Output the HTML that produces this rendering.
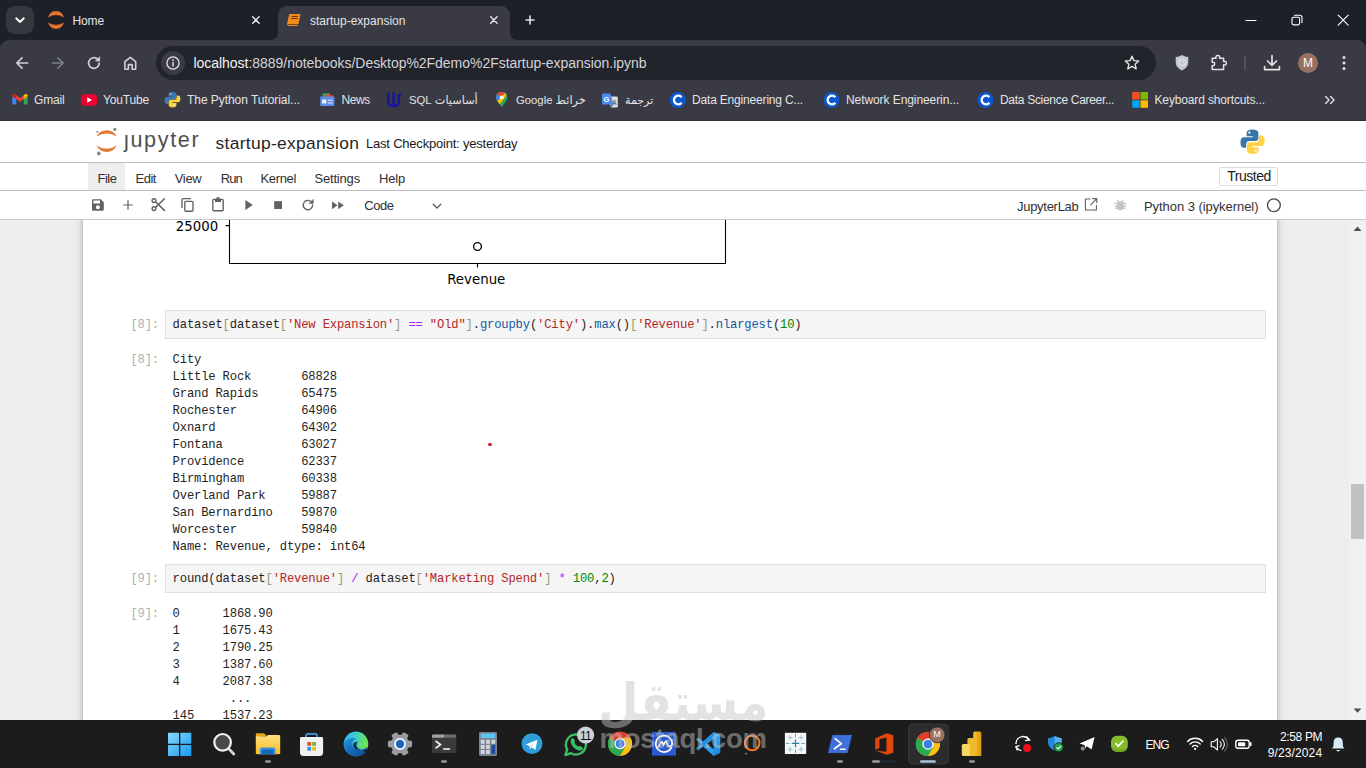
<!DOCTYPE html>
<html lang="en">
<head>
<meta charset="utf-8">
<title>startup-expansion</title>
<style>
*{box-sizing:border-box;margin:0;padding:0}
html,body{width:1366px;height:768px;overflow:hidden;background:#fff}
body{font-family:"Liberation Sans","DejaVu Sans",sans-serif;position:relative;color:#000}
.abs{position:absolute}
svg{position:absolute;overflow:visible}
/* chrome */
#tabstrip{position:absolute;left:0;top:0;width:1366px;height:60px;background:#1e2029}
#toolbar{position:absolute;left:0;top:40px;width:1366px;height:81px;background:#393a43;border-radius:9px 9px 0 0}
#activetab{position:absolute;left:278px;top:6px;width:232px;height:34px;background:#393a43;border-radius:9px 9px 0 0}
.tabtxt{position:absolute;top:14px;font-size:12px;color:#e3e3e3;line-height:15px;white-space:nowrap}
#urlbar{position:absolute;left:156px;top:46px;width:999.5px;height:34px;border-radius:17px;background:#22242c}
#urltxt{position:absolute;left:193.5px;top:53.5px;font-size:14px;letter-spacing:-0.035px;line-height:18px;color:#d2d3d6;white-space:nowrap}
.bm{position:absolute;top:93px;font-size:12px;line-height:15px;color:#e3e3e3;white-space:nowrap}
#pageedge{position:absolute;left:0;top:120px;width:1366px;height:1px;background:#303138}
/* jupyter */
#page{position:absolute;left:0;top:121px;width:1366px;height:599px;background:#fff}
#nbarea{position:absolute;left:0;top:220px;width:1349px;height:500px;background:#eee}
#nbarea{overflow:hidden}
#nbpanel{position:absolute;left:83px;top:-20px;width:1193.5px;height:560px;background:#fff;box-shadow:0px 2px 4px -1px rgba(0,0,0,.2),0px 4px 5px 0px rgba(0,0,0,.14),0px 1px 10px 0px rgba(0,0,0,.12)}
.hl{position:absolute;left:0;width:1366px;height:1px;background:#bdbdbd}
.menu{position:absolute;top:171px;font-size:13px;line-height:15px;color:#303030;white-space:nowrap}
.code{font-family:"Liberation Mono","DejaVu Sans Mono",monospace;font-size:12.2px;letter-spacing:-0.17px;line-height:17px;white-space:pre;color:#1f1f1f}
.code i,.code s,.code b,.code u,.code em{font-style:normal;text-decoration:none;font-weight:normal}
.code i{color:#999977}.code s{color:#b42626}.code b{color:#aa22ff}.code u{color:#15579f}.code em{color:#008800}
.cellin{position:absolute;left:165px;width:1101px;height:29px;background:#f5f5f5;border:1px solid #e0e0e0}
.prompt{position:absolute;left:130.4px;color:#b0b0b0}
/* taskbar */
#taskbar{position:absolute;left:0;top:720px;width:1366px;height:48px;background:#1c1c1c}
.tbt{font-size:12px;line-height:14px;color:#fff;white-space:nowrap}
</style>
</head>
<body>
<div id="tabstrip"></div>
<div id="toolbar"></div>
<div id="activetab"></div>
<!-- ===== Chrome browser UI ===== -->
<div class="tabtxt" style="left:72.5px;letter-spacing:-0.13px">Home</div>
<div class="tabtxt" style="left:310px">startup-expansion</div>
<div id="urlbar"></div>
<div id="urltxt"><span style="color:#f2f2f2">localhost</span>:8889/notebooks/Desktop%2Fdemo%2Fstartup-expansion.ipynb</div>
<div class="bm" style="left:34px;letter-spacing:-0.17px">Gmail</div>
<div class="bm" style="left:103px;letter-spacing:-0.17px">YouTube</div>
<div class="bm" style="left:187px;letter-spacing:-0.05px">The Python Tutorial...</div>
<div class="bm" style="left:341.5px;letter-spacing:-0.38px">News</div>
<div class="bm" style="left:409px;font-size:11.3px" dir="rtl">أساسيات SQL</div>
<div class="bm" style="left:516px;font-size:11.3px" dir="rtl">خرائط Google</div>
<div class="bm" style="left:625px;font-size:11px" dir="rtl">ترجمة</div>
<div class="bm" style="left:692px;letter-spacing:-0.18px">Data Engineering C...</div>
<div class="bm" style="left:846px;letter-spacing:-0.08px">Network Engineerin...</div>
<div class="bm" style="left:1000px;letter-spacing:-0.3px">Data Science Career...</div>
<div class="bm" style="left:1154.5px;letter-spacing:-0.14px">Keyboard shortcuts...</div>
<div class="abs" style="left:1298px;top:53px;width:20px;height:20px;border-radius:10px;background:#9a7064;color:#fff;font-size:12px;line-height:20px;text-align:center">M</div>
<svg id="chromeicons" width="1366" height="120" viewBox="0 0 1366 120" style="left:0;top:0" fill="none" stroke-linecap="round" stroke-linejoin="round">
  <!-- tab search button -->
  <rect x="6" y="6" width="28" height="28" rx="9" fill="#363840"/>
  <path d="M16.2 18.3 L20 22 L23.8 18.3" stroke="#fff" stroke-width="1.9"/>
  <!-- jupyter favicon (Home tab) -->
  <path d="M48.5 16.9 A7.8 7.8 0 0 1 63.5 16.9 A15.75 15.75 0 0 0 48.5 16.9 Z" fill="#e8742c" stroke="#e8742c" stroke-width="0.4"/>
  <path d="M48.5 23.1 A7.8 7.8 0 0 0 63.5 23.1 A15.75 15.75 0 0 1 48.5 23.1 Z" fill="#e8742c" stroke="#e8742c" stroke-width="0.4"/>
  <!-- close x home tab -->
  <path d="M252.7 16.8 L259.1 23.2 M259.1 16.8 L252.7 23.2" stroke="#e3e3e3" stroke-width="1.5"/>
  <!-- active tab flares -->
  <path d="M270 40 Q278 40 278 32 L278 40 Z" fill="#393a43" stroke="none"/>
  <path d="M518 40 Q510 40 510 32 L510 40 Z" fill="#393a43" stroke="none"/>
  <!-- notebook favicon -->
  <g transform="translate(287 13.3)">
    <path d="M3.2 0.8 L12.6 0.8 Q13.6 0.8 13.4 1.8 L11.6 10.2 Q11.4 11 10.6 11 L1 11 Q0 11 0.2 10 L2 1.8 Q2.2 0.8 3.2 0.8 Z" fill="#f28a1c" stroke="none"/>
    <path d="M0.6 10.6 L0.6 11.4 Q0.6 12.2 1.6 12.2 L10.4 12.2" stroke="#f28a1c" stroke-width="1"/>
    <path d="M5 3.2 L10.6 3.2 M4.6 5.2 L10.2 5.2" stroke="#6a3500" stroke-width="1"/>
  </g>
  <!-- close x active tab -->
  <path d="M490.7 16.8 L497.1 23.2 M497.1 16.8 L490.7 23.2" stroke="#e3e3e3" stroke-width="1.5"/>
  <!-- new tab plus -->
  <path d="M526.1 20 L533.9 20 M530 16.1 L530 23.9" stroke="#e3e3e3" stroke-width="1.6"/>
  <!-- window controls -->
  <path d="M1246 20.5 L1256 20.5" stroke="#fff" stroke-width="1.1"/>
  <rect x="1292" y="17.3" width="7.6" height="7.6" rx="1.6" stroke="#fff" stroke-width="1.1"/>
  <path d="M1294.4 15.2 L1299.6 15.2 Q1302 15.2 1302 17.6 L1302 22.6" stroke="#fff" stroke-width="1.1"/>
  <path d="M1338.2 15.2 L1348.2 25.2 M1348.2 15.2 L1338.2 25.2" stroke="#fff" stroke-width="1.1"/>
  <!-- nav: back, forward, reload, home -->
  <path d="M27.6 63 L17 63 M22 57.8 L16.8 63 L22 68.2" stroke="#d0d1d4" stroke-width="1.7"/>
  <path d="M52.4 63 L63 63 M58 57.8 L63.2 63 L58 68.2" stroke="#7b7d84" stroke-width="1.7"/>
  <path d="M99.2 63 A5.3 5.3 0 1 1 97.6 59.2" stroke="#d0d1d4" stroke-width="1.7"/>
  <path d="M99.6 57.2 L99.6 61 L95.8 61 Z" fill="#d0d1d4" stroke="#d0d1d4" stroke-width="0.8"/>
  <path d="M124.9 69.2 L124.9 61.6 L130.3 57.4 L135.7 61.6 L135.7 69.2 L132.2 69.2 L132.2 64.6 L128.4 64.6 L128.4 69.2 Z" stroke="#d0d1d4" stroke-width="1.6"/>
  <!-- site info -->
  <circle cx="173" cy="63" r="12" fill="#3a3b44"/>
  <circle cx="173" cy="63" r="6.1" stroke="#e3e3e3" stroke-width="1.3"/>
  <path d="M173 62.4 L173 66" stroke="#e3e3e3" stroke-width="1.4"/>
  <circle cx="173" cy="59.9" r="0.85" fill="#e3e3e3"/>
  <!-- star -->
  <path d="M1132 56.2 L1133.9 60.6 L1138.7 61 L1135.1 64.2 L1136.2 68.9 L1132 66.4 L1127.8 68.9 L1128.9 64.2 L1125.3 61 L1130.1 60.6 Z" stroke="#e3e3e3" stroke-width="1.4"/>
  <!-- shield extension -->
  <path d="M1182 55 Q1185 56.8 1188.3 57 L1188.3 62.5 Q1188 68 1182 70.5 Q1176 68 1175.7 62.5 L1175.7 57 Q1179 56.8 1182 55 Z" fill="#c3c7ce" stroke="none"/>
  <circle cx="1182.4" cy="62.4" r="3.3" stroke="#e9ebef" stroke-width="1"/>
  <path d="M1182.4 62.4 L1184.6 60.4" stroke="#e9ebef" stroke-width="0.9"/>
  <!-- puzzle -->
  <path d="M1212.2 58.2 L1216 58.2 Q1215.4 55.4 1217.8 55.4 Q1220.2 55.4 1219.6 58.2 L1223.6 58.2 L1223.6 61.6 Q1226.4 61 1226.4 63.2 Q1226.4 65.4 1223.6 64.8 L1223.6 69.6 L1212.2 69.6 L1212.2 65.6 Q1214.6 66 1214.6 63.9 Q1214.6 61.8 1212.2 62.2 Z" stroke="#e3e3e3" stroke-width="1.5"/>
  <!-- separator -->
  <path d="M1245 56 L1245 70" stroke="#5c5e66" stroke-width="1.4"/>
  <!-- download -->
  <path d="M1272 55.6 L1272 65 M1267.6 61 L1272 65.4 L1276.4 61" stroke="#e3e3e3" stroke-width="1.7"/>
  <path d="M1264.6 66.6 L1264.6 69.6 L1279.4 69.6 L1279.4 66.6" stroke="#e3e3e3" stroke-width="1.7"/>
  <!-- kebab -->
  <circle cx="1344" cy="57.6" r="1.5" fill="#e3e3e3"/><circle cx="1344" cy="63" r="1.5" fill="#e3e3e3"/><circle cx="1344" cy="68.4" r="1.5" fill="#e3e3e3"/>
  <!-- bookmark favicons -->
  <g stroke="none">
    <!-- gmail -->
    <path d="M12.4 96.2 L12.4 103.4 Q12.4 104.5 13.5 104.5 L16.3 104.5 L16.3 99 Z" fill="#4285f4"/>
    <path d="M27.6 96.2 L27.6 103.4 Q27.6 104.5 26.5 104.5 L23.7 104.5 L23.7 99 Z" fill="#34a853"/>
    <path d="M12.4 96.2 L12.4 95.4 Q12.4 94 14 94 Q14.8 94 15.4 94.5 L20 98 L24.6 94.5 Q25.2 94 26 94 Q27.6 94 27.6 95.4 L27.6 96.2 L23.7 99.1 L20 101.9 L16.3 99.1 Z" fill="#ea4335"/>
    <path d="M23.7 95.2 L24.6 94.5 Q25.2 94 26 94 Q27.6 94 27.6 95.4 L27.6 96.2 L23.7 99.1 Z" fill="#fbbc04"/>
    <path d="M16.3 95.2 L15.4 94.5 Q14.8 94 14 94 Q12.4 94 12.4 95.4 L12.4 96.2 L16.3 99.1 Z" fill="#c5221f"/>
    <!-- youtube -->
    <rect x="81" y="94.2" width="16" height="11.5" rx="3.2" fill="#f0002f"/>
    <path d="M87.2 97.3 L92 100 L87.2 102.7 Z" fill="#fff"/>
    <!-- python -->
    <path d="M172.3 92 Q168.6 92 168.6 94.4 L168.6 96.4 L172.6 96.4 L172.6 97.1 L166.9 97.1 Q164.6 97.1 164.6 100.6 Q164.6 104 166.9 104 L168.3 104 L168.3 101.8 Q168.3 99.6 170.6 99.6 L174.4 99.6 Q176.3 99.6 176.3 97.7 L176.3 94.4 Q176.3 92 172.3 92 Z" fill="#3d7ab3"/>
    <circle cx="170.4" cy="94.1" r="0.75" fill="#dfe8f0"/>
    <path d="M172.7 107.4 Q176.4 107.4 176.4 105 L176.4 103 L172.4 103 L172.4 102.3 L178.1 102.3 Q180.4 102.3 180.4 98.8 Q180.4 95.4 178.1 95.4 L176.7 95.4 L176.7 97.6 Q176.7 99.8 174.4 99.8 L170.6 99.8 Q168.7 99.8 168.7 101.7 L168.7 105 Q168.7 107.4 172.7 107.4 Z" fill="#ffd43b"/>
    <circle cx="174.6" cy="105.3" r="0.75" fill="#fff7d0"/>
    <!-- news -->
    <path d="M322.5 93.6 L329.5 93 L330 97 L322.8 97 Z" fill="#34a853"/>
    <path d="M326 94.2 L333.4 95.4 L332.8 99 L326 98 Z" fill="#ea4335"/>
    <path d="M320.2 96.4 L333.2 96.4 Q334.4 96.4 334.4 97.6 L334.4 104.8 Q334.4 106 333.2 106 L321.4 106 Q320.2 106 320.2 104.8 Z" fill="#5b8def"/>
    <path d="M322 99.6 L326.4 99.6 L326.4 103.6 L322 103.6 Z M328 99.8 L332.6 99.8 L332.6 100.8 L328 100.8 Z M328 102.4 L332.6 102.4 L332.6 103.4 L328 103.4 Z" fill="#e8eefc"/>
    <!-- udacity U -->
    <path d="M387 93.4 L389.6 92.2 L389.6 101.6 Q389.6 104.4 392.4 104.8 L392.4 92.6 L394.8 92.6 L394.8 104.8 Q397.6 104.4 397.6 101.6 L397.6 94.2 L403 92.2 L400.2 95.6 L400.2 101.8 Q400.2 107.4 393.6 107.4 Q387 107.4 387 101.8 Z" fill="#17179a"/>
    <!-- maps pin -->
    <path d="M501.7 92 Q507.3 92 507.3 97.4 Q507.3 100.2 503.6 104.2 Q502.4 105.6 501.7 107.4 Q501 105.6 499.8 104.2 Q496.1 100.2 496.1 97.4 Q496.1 92 501.7 92 Z" fill="#34a853"/>
    <path d="M501.7 92 Q498.4 92 497 94.4 L501.7 97.4 L505 93 Q503.6 92 501.7 92 Z" fill="#ea4335"/>
    <path d="M497 94.4 Q496.1 95.6 496.1 97.4 Q496.1 99 497.4 101 L501.7 97.4 Z" fill="#4285f4"/>
    <path d="M497.4 101 Q498.6 102.8 499.8 104.2 L506.4 95.6 Q505.8 94 505 93 Z" fill="#fbbc04"/>
    <circle cx="501.7" cy="97.3" r="1.9" fill="#fff"/>
    <!-- translate -->
    <path d="M607.6 96.6 L616.6 96.6 Q617.8 96.6 617.8 97.8 L617.8 106.2 Q617.8 107.4 616.6 107.4 L611 107.4 Z" fill="#dcdde0"/>
    <path d="M603.2 93.4 L610.4 93.4 L613.4 104.6 L603.2 104.6 Q602 104.6 602 103.4 L602 94.6 Q602 93.4 603.2 93.4 Z" fill="#4a8af4"/>
    <path d="M611 107.4 L613.4 104.6 L610.6 104.6 Z" fill="#3367d6"/>
    <!-- coursera x3 -->
    <circle cx="677.8" cy="100" r="8" fill="#0b57d0"/>
    <circle cx="831.5" cy="100" r="8" fill="#0b57d0"/>
    <circle cx="985.5" cy="100" r="8" fill="#0b57d0"/>
    <!-- microsoft -->
    <rect x="1132.2" y="92" width="7.5" height="7.5" fill="#f25022"/><rect x="1140.5" y="92" width="7.5" height="7.5" fill="#7fba00"/>
    <rect x="1132.2" y="100.3" width="7.5" height="7.5" fill="#00a4ef"/><rect x="1140.5" y="100.3" width="7.5" height="7.5" fill="#ffb900"/>
  </g>
  <g stroke="#fff" stroke-width="2.3" stroke-linecap="butt">
    <path d="M681.6 97.3 A4.3 4.3 0 1 0 681.6 102.7"/>
    <path d="M835.3 97.3 A4.3 4.3 0 1 0 835.3 102.7"/>
    <path d="M989.3 97.3 A4.3 4.3 0 1 0 989.3 102.7"/>
  </g>
  <g font-family="Liberation Sans, sans-serif" font-weight="bold" stroke="none">
    <text x="603.6" y="101.6" font-size="7.5" fill="#fff">G</text>
    <text x="612" y="105.4" font-size="6.5" fill="#6b6f78">A</text>
  </g>
  <!-- bookmarks overflow chevrons -->
  <path d="M1325.6 96.6 L1329 100 L1325.6 103.4 M1330.6 96.6 L1334 100 L1330.6 103.4" stroke="#e3e3e3" stroke-width="1.4"/>
</svg>
<div id="pageedge"></div>
<div id="page"></div>
<div id="nbarea"><div id="nbpanel"></div></div>
<!-- ===== Jupyter header ===== -->
<div class="hl" style="top:162px"></div>
<div class="hl" style="top:190px"></div>
<div class="hl" style="top:219px;background:#c8c8c8"></div>
<div class="abs" style="left:88px;top:163px;width:37px;height:27px;background:#eeeeee"></div>
<div class="abs" id="jlogo" style="left:124px;top:127px;font-size:21.6px;line-height:26px;letter-spacing:1.64px;color:#505050;white-space:nowrap">jupyter</div>
<div class="abs" style="left:124px;top:129.5px;width:8px;height:5.4px;background:#fff"></div>
<div class="abs" style="left:215.5px;top:131.8px;font-size:17.4px;line-height:22px;letter-spacing:0.32px;color:#262626;white-space:nowrap">startup-expansion</div>
<div class="abs" style="left:366px;top:135.9px;font-size:13px;line-height:15px;letter-spacing:-0.21px;color:#1a1a1a;white-space:nowrap">Last Checkpoint: yesterday</div>
<div class="menu" style="left:97.6px;letter-spacing:-0.56px">File</div>
<div class="menu" style="left:135.5px;letter-spacing:-0.48px">Edit</div>
<div class="menu" style="left:174.8px;letter-spacing:-0.36px">View</div>
<div class="menu" style="left:220.7px;letter-spacing:-0.89px">Run</div>
<div class="menu" style="left:260.5px;letter-spacing:-0.35px">Kernel</div>
<div class="menu" style="left:314.5px;letter-spacing:-0.19px">Settings</div>
<div class="menu" style="left:379px;letter-spacing:-0.19px">Help</div>
<div class="abs" style="left:1219px;top:167px;width:59px;height:19px;border:1px solid #dcdcdc;border-radius:2px;background:#fff"></div>
<div class="abs" style="left:1227.3px;top:167.8px;font-size:14px;line-height:17px;letter-spacing:-0.49px;color:#1a1a1a;white-space:nowrap">Trusted</div>
<div class="menu" style="left:364.3px;top:197.6px;letter-spacing:-0.45px">Code</div>
<div class="menu" style="left:1017px;top:198.5px;letter-spacing:-0.28px;color:#333">JupyterLab</div>
<div class="menu" style="left:1144px;top:198.5px;letter-spacing:-0.06px;color:#333">Python 3 (ipykernel)</div>
<svg id="jupicons" width="1366" height="100" viewBox="0 120 1366 100" style="left:0;top:120px" fill="none" stroke-linecap="round" stroke-linejoin="round">
  <!-- jupyter logo -->
  <path d="M96.6 136.5 A11.2 11.2 0 0 1 116.8 136.5 A18 18 0 0 0 96.6 136.5 Z" fill="#e47a32"/>
  <path d="M96.6 145.6 A11.2 11.2 0 0 0 116.8 145.6 A18 18 0 0 1 96.6 145.6 Z" fill="#e47a32"/>
  <circle cx="114.9" cy="129.5" r="1.45" fill="#767677"/>
  <circle cx="97.2" cy="131.8" r="0.9" fill="#767677"/>
  <circle cx="98.8" cy="153.5" r="1.9" fill="#8a8a8a"/>
  <!-- python logo -->
  <g transform="translate(1240.5 129.4) scale(1.53)">
    <path d="M7.7 0 Q4 0 4 2.4 L4 4.4 L8 4.4 L8 5.1 L2.3 5.1 Q0 5.1 0 8.6 Q0 12 2.3 12 L3.7 12 L3.7 9.8 Q3.7 7.6 6 7.6 L9.8 7.6 Q11.7 7.6 11.7 5.7 L11.7 2.4 Q11.7 0 7.7 0 Z" fill="#3776ab"/>
    <circle cx="5.8" cy="2.1" r="0.75" fill="#fff"/>
    <path d="M8.1 16 Q11.8 16 11.8 13.6 L11.8 11.6 L7.8 11.6 L7.8 10.9 L13.5 10.9 Q15.8 10.9 15.8 7.4 Q15.8 4 13.5 4 L12.1 4 L12.1 6.2 Q12.1 8.4 9.8 8.4 L6 8.4 Q4.1 8.4 4.1 10.3 L4.1 13.6 Q4.1 16 8.1 16 Z" fill="#ffd343"/>
    <circle cx="10" cy="13.9" r="0.75" fill="#fff"/>
  </g>
  <!-- toolbar icons -->
  <g fill="#616161" stroke="none">
    <!-- save -->
    <path d="M93.2 199.2 L100.8 199.2 L103.8 202.2 L103.8 209.6 Q103.8 210.8 102.6 210.8 L93.2 210.8 Q92 210.8 92 209.6 L92 200.4 Q92 199.2 93.2 199.2 Z M93.4 200.6 L93.4 203.4 L100 203.4 L100 200.6 Z M97.9 205.3 A2 2 0 1 0 97.9 209.3 A2 2 0 1 0 97.9 205.3 Z" fill-rule="evenodd"/>
    <!-- plus -->
    <path d="M127.4 200.2 L128.6 200.2 L128.6 204.4 L132.8 204.4 L132.8 205.6 L128.6 205.6 L128.6 209.8 L127.4 209.8 L127.4 205.6 L123.2 205.6 L123.2 204.4 L127.4 204.4 Z"/>
    <!-- play -->
    <path d="M245.4 200 L252.8 205 L245.4 210 Z"/>
    <!-- stop -->
    <rect x="274.2" y="201.2" width="7.8" height="7.8"/>
    <!-- fast forward -->
    <path d="M332 201.4 L337.6 205.3 L332 209.2 Z M338.2 201.4 L343.8 205.3 L338.2 209.2 Z"/>
  </g>
  <g stroke="#616161" stroke-width="1.35">
    <!-- scissors -->
    <circle cx="154" cy="208.6" r="1.9"/>
    <circle cx="154" cy="200.6" r="1.9"/>
    <path d="M155.6 201.8 L164.4 210.4 M155.6 207.4 L164.4 198.8" stroke-width="1.5"/>
    <!-- copy -->
    <path d="M182 207.6 L182 199.8 Q182 198.6 183.2 198.6 L190.4 198.6"/>
    <rect x="184.8" y="201.4" width="8.2" height="9.8" rx="1"/>
    <!-- paste -->
    <rect x="212.8" y="199.4" width="10.4" height="11.4" rx="1"/>
    <path d="M215.6 199.4 L215.6 201.4 L220.4 201.4 L220.4 199.4 Z" fill="#616161"/>
    <path d="M216.8 198.4 Q218 196.8 219.2 198.4" />
    <!-- restart -->
    <path d="M312.6 205 A4.7 4.7 0 1 1 311.2 201.7" stroke-width="1.4"/>
    <path d="M313.2 199.6 L313.2 203.4 L309.4 203.4 Z" fill="#616161" stroke-width="0.6"/>
    <!-- dropdown chevron -->
    <path d="M433.2 204.2 L437 208 L440.8 204.2" stroke-width="1.4"/>
    <!-- launch icon -->
    <path d="M1090 199 L1085.4 199 L1085.4 210 L1096.4 210 L1096.4 205.4" stroke-width="1.1"/>
    <path d="M1092.6 198.6 L1096.8 198.6 L1096.8 202.8 M1096.6 198.8 L1090.6 204.8" stroke-width="1.1"/>
    <!-- kernel status circle -->
    <circle cx="1273.9" cy="205.2" r="6.4" stroke="#4a4a4a" stroke-width="1.3"/>
  </g>
  <!-- bug icon -->
  <g stroke="#c4c4c4" stroke-width="1.2">
    <ellipse cx="1120.3" cy="205.8" rx="3" ry="4" fill="#c4c4c4"/>
    <path d="M1115 203.4 L1125.6 203.4 M1115 205.8 L1125.6 205.8 M1115 208.2 L1125.6 208.2 M1117.6 200.6 L1118.8 202 M1123 200.6 L1121.8 202"/>
  </g>
</svg>
<!-- ===== Notebook content ===== -->
<svg id="plot" width="600" height="70" viewBox="170 220 600 70" style="left:170px;top:220px" fill="none">
  <path d="M229.5 220 L229.5 263.5 L725.5 263.5 L725.5 220" stroke="#000" stroke-width="1.1"/>
  <path d="M225.6 225.6 L229.5 225.6 M477.5 263.5 L477.5 267.4" stroke="#000" stroke-width="1.1"/>
  <circle cx="477.5" cy="246.5" r="3.9" stroke="#000" stroke-width="1.35"/>
  <text x="175.8" y="230.8" font-family="DejaVu Sans, sans-serif" font-size="13.3" fill="#000">25000</text>
  <text x="447.2" y="284" font-family="DejaVu Sans, sans-serif" font-size="13.35" fill="#000">Revenue</text>
</svg>
<div class="cellin" style="top:310px"></div>
<div class="code prompt" style="top:316.9px">[8]:</div>
<div class="code abs" style="left:172.6px;top:316.9px">dataset<i>[</i>dataset<i>[</i><s>'New Expansion'</s><i>]</i> <b>==</b> <s>"Old"</s><i>]</i>.<u>groupby</u>(<s>'City'</s>).<u>max</u>()<i>[</i><s>'Revenue'</s><i>]</i>.<u>nlargest</u>(<em>10</em>)</div>
<div class="code prompt" style="top:352.2px">[8]:</div>
<div class="code abs" style="left:172.6px;top:352.2px">City
Little Rock       68828
Grand Rapids      65475
Rochester         64906
Oxnard            64302
Fontana           63027
Providence        62337
Birmingham        60338
Overland Park     59887
San Bernardino    59870
Worcester         59840
Name: Revenue, dtype: int64</div>
<div class="abs" style="left:488.2px;top:442.7px;width:3.6px;height:3.6px;border-radius:50%;background:#c4262a"></div>
<div class="cellin" style="top:564px"></div>
<div class="code prompt" style="top:570.9px">[9]:</div>
<div class="code abs" style="left:172.6px;top:570.9px">round(dataset<i>[</i><s>'Revenue'</s><i>]</i> <b>/</b> dataset<i>[</i><s>'Marketing Spend'</s><i>]</i> <b>*</b> <em>100</em>,<em>2</em>)</div>
<div class="code prompt" style="top:606.2px">[9]:</div>
<div class="code abs" style="left:172.6px;top:606.2px;height:113.8px;overflow:hidden">0      1868.90
1      1675.43
2      1790.25
3      1387.60
4      2087.38
        ...   
145    1537.23</div>
<!-- scrollbar -->
<div class="abs" style="left:1349px;top:220px;width:17px;height:500px;background:#f1f1f1"></div>
<div class="abs" style="left:1351px;top:484px;width:13px;height:55px;background:#c1c1c1"></div>
<svg width="17" height="500" viewBox="0 0 17 500" style="left:1349px;top:220px"><path d="M4.5 11 L8.5 6.6 L12.5 11 Z" fill="#505050"/><path d="M4.5 488.4 L8.5 492.8 L12.5 488.4 Z" fill="#505050"/></svg>
<div id="taskbar"></div>
<!-- ===== Windows taskbar ===== -->
<svg id="tbicons" width="1366" height="48" viewBox="0 720 1366 48" style="left:0;top:720px" fill="none">
  <defs>
    <linearGradient id="gwin" gradientUnits="userSpaceOnUse" x1="168" y1="733" x2="191" y2="756"><stop offset="0" stop-color="#86dafc"/><stop offset="1" stop-color="#189af0"/></linearGradient>
    <linearGradient id="gfold" x1="0" y1="0" x2="0" y2="1"><stop offset="0" stop-color="#ffe07a"/><stop offset="1" stop-color="#f7bd2e"/></linearGradient>
    <linearGradient id="gedge" x1="0" y1="0" x2="1" y2="0.25"><stop offset="0" stop-color="#2fb4ee"/><stop offset="0.5" stop-color="#3ccfd0"/><stop offset="1" stop-color="#72e44a"/></linearGradient>
    <linearGradient id="gedge2" x1="0" y1="0" x2="0.6" y2="1"><stop offset="0" stop-color="#2597e4"/><stop offset="1" stop-color="#0c52a2"/></linearGradient>
    <linearGradient id="gpbi" x1="0" y1="0" x2="1" y2="0"><stop offset="0" stop-color="#f2c530"/><stop offset="1" stop-color="#dd9a10"/></linearGradient>
    <linearGradient id="gvs" x1="0" y1="0" x2="0" y2="1"><stop offset="0" stop-color="#35b0fb"/><stop offset="1" stop-color="#1b84d6"/></linearGradient>
  </defs>
  <!-- windows -->
  <rect x="168" y="732.8" width="11" height="11" rx="0.6" fill="url(#gwin)"/><rect x="180.3" y="732.8" width="11" height="11" rx="0.6" fill="url(#gwin)"/>
  <rect x="168" y="745.1" width="11" height="11" rx="0.6" fill="url(#gwin)"/><rect x="180.3" y="745.1" width="11" height="11" rx="0.6" fill="url(#gwin)"/>
  <!-- search -->
  <path d="M228.6 748.6 L233.8 754" stroke="#d8d8d8" stroke-width="2.8" stroke-linecap="round"/>
  <circle cx="222.6" cy="742.3" r="8.3" fill="#4a4a4a" stroke="#f2f2f2" stroke-width="2.2"/>
  <!-- file explorer -->
  <path d="M255.8 734.6 Q255.8 733.2 257.2 733.2 L263.4 733.2 Q264.4 733.2 265 733.9 L266.6 735.8 L255.8 737 Z" fill="#e4a512"/>
  <path d="M255.8 736.2 L266.4 736.2 L268 734.9 L278.8 734.9 Q280.2 734.9 280.2 736.3 L280.2 752.9 Q280.2 754.3 278.8 754.3 L257.2 754.3 Q255.8 754.3 255.8 752.9 Z" fill="url(#gfold)"/>
  <path d="M260 754.3 L260 749.6 Q260 747.6 262 747.6 L273.3 747.6 Q275.3 747.6 275.3 749.6 L275.3 754.3 Z" fill="#2f8fdb"/>
  <path d="M262.2 754.3 L262.2 750.8 Q262.2 749.8 263.2 749.8 L272.1 749.8 Q273.1 749.8 273.1 750.8 L273.1 754.3 Z" fill="#1765b5"/>
  <rect x="265" y="760.2" width="6" height="2.5" rx="1.25" fill="#9a9a9a"/>
  <!-- store -->
  <path d="M306 739 L306 736.2 Q306 733.9 308.3 733.9 L314.8 733.9 Q317.1 733.9 317.1 736.2 L317.1 739" stroke="#3f9bdc" stroke-width="1.7"/>
  <path d="M300 738.4 Q300 737 301.4 737 L321.7 737 Q323.1 737 323.1 738.4 L323.1 752.6 Q323.1 756 319.7 756 L303.4 756 Q300 756 300 752.6 Z" fill="#f1f1f1"/>
  <rect x="307.3" y="742" width="3.8" height="3.8" fill="#e3522f"/><rect x="312.2" y="742" width="3.8" height="3.8" fill="#7ab52c"/>
  <rect x="307.3" y="746.9" width="3.8" height="3.8" fill="#2a9be0"/><rect x="312.2" y="746.9" width="3.8" height="3.8" fill="#f3b928"/>
  <!-- edge -->
  <circle cx="356" cy="743.9" r="12.3" fill="url(#gedge)"/>
  <path d="M343.8 742.6 Q348.6 736.6 356.6 738.4 Q351.6 740.4 352.4 745.6 Q353.6 749.6 358.8 749.8 Q364.4 749.6 368 746.8 Q366.6 754 359.4 756 Q350.6 757.6 345.6 750.6 Q343.2 746.6 343.8 742.6 Z" fill="url(#gedge2)"/>
  <path d="M368.8 748.4 Q365.6 750.6 362.4 750.5 Q365.2 752.6 367.8 752 Z" fill="#1c1c1c"/>
  <path d="M353.2 744.4 Q354 741.2 357.8 741.8 Q355.8 743.8 356.6 746.4 Q357.8 748.8 360.8 749.4 Q355.2 750.4 353.6 747 Q353 745.6 353.2 744.4 Z" fill="#0a2d52"/>
  <!-- settings gear -->
  <g fill="#989aa5" transform="rotate(30 400 744)">
    <circle cx="400" cy="744" r="9.2"/>
    <g id="teeth">
      <rect x="396.6" y="731.9" width="6.8" height="6" rx="1.8"/><rect x="396.6" y="750.1" width="6.8" height="6" rx="1.8"/>
    </g>
    <use href="#teeth" transform="rotate(60 400 744)"/><use href="#teeth" transform="rotate(120 400 744)"/>
  </g>
  <circle cx="400" cy="744" r="5.1" fill="#1a64c0" stroke="#f4f6fa" stroke-width="1.9"/>
  <!-- terminal -->
  <rect x="432" y="734.5" width="24.2" height="18.5" rx="1.2" fill="#3b3b3b"/>
  <path d="M432 737.8 L432 735.7 Q432 734.5 433.2 734.5 L444 734.5 L444 737.8 Z" fill="#a2a2a2"/><path d="M444 734.5 L455 734.5 Q456.2 734.5 456.2 735.7 L456.2 737.8 L444 737.8 Z" fill="#6c6c6c"/>
  <path d="M435.6 741 L440.4 744.6 L435.6 748.2" stroke="#f2f2f2" stroke-width="1.7"/><path d="M443.2 749 L450 749" stroke="#f2f2f2" stroke-width="1.6"/>
  <rect x="441" y="760.2" width="6" height="2.5" rx="1.25" fill="#9a9a9a"/>
  <!-- calculator -->
  <rect x="479" y="731.9" width="18" height="24.1" rx="1.4" fill="#7a8291"/>
  <rect x="480.8" y="733.6" width="14.4" height="4.4" fill="#5cc6f4"/>
  <g fill="#d2d6de"><rect x="480.8" y="739.8" width="3.8" height="4"/><rect x="486.1" y="739.8" width="3.8" height="4"/><rect x="491.4" y="739.8" width="3.8" height="4"/>
  <rect x="480.8" y="744.9" width="3.8" height="4"/><rect x="486.1" y="744.9" width="3.8" height="4"/>
  <rect x="480.8" y="750" width="3.8" height="4"/><rect x="486.1" y="750" width="3.8" height="4"/></g>
  <rect x="491.4" y="744.9" width="3.8" height="9.1" fill="#1d4c9b"/>
  <!-- telegram -->
  <circle cx="532" cy="743.7" r="10.4" fill="#2f9fdb"/>
  <path d="M525.8 744.4 L537.4 739.8 L535.4 750 L531.6 747.3 L529.9 749.3 L529.7 746.3 Z" fill="#fff"/><path d="M529.7 746.3 L534.8 742 L531.6 747.3 Z" fill="#c9e3f3"/>
  <!-- whatsapp -->
  <path d="M565.4 755 L567.2 749.4 A10 10 0 1 1 571 753.2 Z" stroke="#38bf62" stroke-width="2.4" stroke-linejoin="round"/>
  <path d="M571.6 738.6 Q572.6 737.6 573.6 738.6 L575 741 Q575.2 741.8 574.4 742.6 Q575.4 745.4 578.6 746.8 Q579.4 745.8 580.2 746 L582.6 747.4 Q583.2 748.2 582.4 749.4 Q580.8 751.2 578 750.2 Q572.6 748.2 570.8 742.8 Q570.2 740.2 571.6 738.6 Z" fill="#38bf62"/>
  <circle cx="585.6" cy="735" r="8.6" fill="#cdd0d8"/>
  <!-- chrome -->
  <g id="chromeico">
    <circle cx="620" cy="743.7" r="12" fill="#fbc116"/>
    <path d="M620 743.7 L609.6 737.7 A12 12 0 0 1 630.4 737.7 Z" fill="#e33b2e"/>
    <path d="M620 731.7 A12 12 0 0 1 630.4 737.7 L620 737.7 Z" fill="#e33b2e"/>
    <path d="M609.6 737.7 A12 12 0 0 0 620 755.7 L625.2 746.7 L620 743.7 Z" fill="#2da94f"/>
    <path d="M609.6 737.7 L614.8 746.7 L620 755.7 A12 12 0 0 1 609.6 737.7 Z" fill="#2da94f"/>
    <path d="M620 737.7 L630.4 737.7 A12 12 0 0 1 620 755.7 L625.2 746.7 Z" fill="#fbc116"/>
    <path d="M614.8 746.7 L620 755.7 L625.2 746.7 Z" fill="#2da94f"/>
    <circle cx="620" cy="743.7" r="5.6" fill="#fff"/><circle cx="620" cy="743.7" r="4.4" fill="#3b7de9"/>
  </g>
  <!-- coinmarketcap -->
  <rect x="652" y="731.9" width="24" height="23.7" fill="#2b5ad0"/>
  <path d="M671.4 747.4 A8.2 8.2 0 1 1 672.2 743.4" stroke="#fff" stroke-width="1.7" stroke-linecap="round"/>
  <path d="M658.4 747 L661.2 742.2 Q661.9 741.2 662.4 742.4 L663.4 745 L665.4 741.6 Q666.2 740.6 666.6 741.8 L667.8 745.4 Q668.8 747.4 671 746 Q672.2 745 672.2 743.4" stroke="#fff" stroke-width="1.6" stroke-linecap="round" stroke-linejoin="round"/>
  <!-- vscode -->
  <path d="M713.8 731.9 L720.3 735 L720.3 752.9 L713.8 756 L700.4 743.9 Z" fill="url(#gvs)"/>
  <path d="M713.8 738.6 L713.8 749.4 L707 744 Z" fill="#1c1c1c"/>
  <path d="M696 739.4 L698 737.6 L713.8 749.6 L713.8 756 Z" fill="#2a9df0"/>
  <path d="M696 748.6 L698 750.4 L713.8 738.4 L713.8 731.9 Z" fill="#2391e4"/>
  <!-- jupyter -->
  <circle cx="752.2" cy="743" r="7.3" stroke="#f37726" stroke-width="2.1"/>
  <path d="M747.5 735.5 L757 735.5 L757 750.5 L747.5 750.5 Z" fill="none"/>
  <circle cx="746" cy="753.6" r="0.9" fill="#9a9a9a"/>
  <!-- tableau -->
  <rect x="784.9" y="732.8" width="21.3" height="21.2" fill="#f4f8fb"/>
  <g stroke="#8fc0d8" stroke-width="0.9">
    <path d="M790 735 L790 740 M787.5 737.5 L792.5 737.5 M801 735 L801 740 M798.5 737.5 L803.5 737.5 M790 746.8 L790 751.8 M787.5 749.3 L792.5 749.3 M801 746.8 L801 751.8 M798.5 749.3 L803.5 749.3"/>
    <path d="M795.5 733.8 L795.5 737.4 M795.5 749.4 L795.5 753 M786 743.4 L789.6 743.4 M801.4 743.4 L805 743.4" stroke="#5a9ab4"/>
  </g>
  <path d="M795.5 739.6 L795.5 747.2 M791.7 743.4 L799.3 743.4" stroke="#2f7f99" stroke-width="1.2"/>
  <!-- powershell -->
  <path d="M832.8 735.4 L851.4 735.4 L847.2 752.6 L828.6 752.6 Z" fill="#3f6fd8" stroke="#3f6fd8" stroke-width="1" stroke-linejoin="round"/>
  <path d="M835.2 738.6 L841.2 743.6 L834.4 748.8" stroke="#fff" stroke-width="1.7" stroke-linecap="round"/><path d="M840.6 749.2 L845 749.2" stroke="#fff" stroke-width="1.6" stroke-linecap="round"/>
  <rect x="837" y="760.2" width="6" height="2.5" rx="1.25" fill="#9a9a9a"/>
  <!-- office -->
  <path d="M875.2 738.6 L886.6 733.2 L893.3 735.2 L893.3 752.7 L886.6 754.7 L875.2 750.4 L886.4 751.8 L886.4 737.4 L879.4 739.2 L879.4 748 L875.2 749.8 Z" fill="#e2480c"/>
  <rect x="872" y="760.2" width="24" height="2.5" rx="1.25" fill="#232932"/><rect x="872" y="760.2" width="8" height="2.5" rx="1.25" fill="#9a9a9a"/>
  <!-- active chrome -->
  <rect x="908.5" y="724" width="39.8" height="40" rx="4" fill="#2c2c2c" stroke="#3a3a3a" stroke-width="0.9"/>
  <use href="#chromeico" transform="translate(307.9 0.4)"/>
  <circle cx="937.1" cy="734.9" r="7.9" fill="#9b7266" stroke="#2c2c2c" stroke-width="0.8"/>
  <rect x="920" y="760.2" width="15.8" height="2.5" rx="1.25" fill="#a9c2dc"/>
  <!-- power bi -->
  <path d="M973.2 733 Q973.2 731.5 974.7 731.5 L979.8 731.5 Q981.3 731.5 981.3 733 L981.3 756 L973.2 756 Z" fill="url(#gpbi)"/>
  <path d="M967.4 739.4 Q967.4 737.9 968.9 737.9 L974 737.9 Q975.5 737.9 975.5 739.4 L975.5 756 L967.4 756 Z" fill="#edbb2c"/>
  <path d="M961.8 745.6 Q961.8 744.1 963.3 744.1 L968.4 744.1 Q969.9 744.1 969.9 745.6 L969.9 756 L963.3 756 Q961.8 756 961.8 754.5 Z" fill="#f6d75f"/>
  <rect x="969" y="760.2" width="6" height="2.5" rx="1.25" fill="#9a9a9a"/>
  <!-- sync tray -->
  <path d="M1016 744 A7 7 0 0 1 1028.6 739.4" stroke="#fff" stroke-width="1.3"/>
  <path d="M1026.4 736.4 L1029.6 740 L1025 740.6" stroke="#fff" stroke-width="1.3"/>
  <path d="M1021.4 750.6 A7 7 0 0 1 1016.6 747.6" stroke="#fff" stroke-width="1.3"/>
  <path d="M1019.6 745.6 L1015.8 746.6 L1017.4 750.6" stroke="#fff" stroke-width="1.3"/>
  <circle cx="1027.1" cy="748" r="4" fill="#f00f1c"/>
  <!-- defender -->
  <path d="M1054.8 736 Q1058 738 1061.6 738.2 L1061.6 742.4 Q1061.2 748.2 1054.8 750.4 Q1048.4 748.2 1048 742.4 L1048 738.2 Q1051.6 738 1054.8 736 Z" fill="#2387de"/>
  <path d="M1054.8 736 Q1058 738 1061.6 738.2 L1061.6 742.4 Q1061.2 748.2 1054.8 750.4 Z" fill="#55b2ee"/>
  <circle cx="1058.7" cy="747.3" r="4.6" fill="#1fa24a" stroke="#1c1c1c" stroke-width="0.9"/>
  <path d="M1056.5 747.4 L1058.1 749 L1061 745.8" stroke="#fff" stroke-width="1.2"/>
  <!-- telegram tray -->
  <path d="M1079.6 743.6 L1094.6 737 L1091.6 749.6 L1086.8 746.2 L1085 748.2 L1084.8 745.2 Z" fill="#fff"/>
  <circle cx="1082.8" cy="748.6" r="2.1" fill="#8d8d8d"/>
  <!-- green check -->
  <rect x="1111" y="735.8" width="16.8" height="16" rx="6" fill="#86bc2b"/>
  <path d="M1111.4 747.6 Q1119.4 751.6 1127.4 747.6 Q1126.4 751.8 1121.8 751.8 L1117 751.8 Q1112.4 751.8 1111.4 747.6 Z" fill="#74a825"/>
  <path d="M1115.8 743.6 L1118.3 746.1 L1123 741" stroke="#fff" stroke-width="1.6" stroke-linecap="round" stroke-linejoin="round"/>
  <!-- wifi -->
  <g stroke="#fff" stroke-width="1.4" stroke-linecap="round">
    <path d="M1187.6 741.4 A10.6 10.6 0 0 1 1202.6 741.4"/>
    <path d="M1190 744 A7.2 7.2 0 0 1 1200.2 744"/>
    <path d="M1192.5 746.5 A3.7 3.7 0 0 1 1197.7 746.5"/>
  </g>
  <circle cx="1195.1" cy="748.9" r="1.1" fill="#fff"/>
  <!-- volume -->
  <path d="M1211.2 741.8 L1213.8 741.8 L1217.4 738.6 L1217.4 750 L1213.8 746.8 L1211.2 746.8 Z" stroke="#fff" stroke-width="1.1" stroke-linejoin="round"/>
  <path d="M1220 741.6 A3.6 3.6 0 0 1 1220 747" stroke="#fff" stroke-width="1.1" stroke-linecap="round"/>
  <path d="M1222.2 739.4 A6.6 6.6 0 0 1 1222.2 749.2" stroke="#fff" stroke-width="1.1" stroke-linecap="round"/>
  <path d="M1224.6 737.6 A9.4 9.4 0 0 1 1224.6 751" stroke="#6a6a6a" stroke-width="1.1" stroke-linecap="round"/>
  <!-- battery -->
  <rect x="1235.8" y="740.2" width="13.4" height="8" rx="2.2" stroke="#fff" stroke-width="1.4"/>
  <path d="M1250.8 742.8 L1250.8 745.6" stroke="#fff" stroke-width="1.5" stroke-linecap="round"/>
  <rect x="1238" y="742.2" width="7.2" height="4" rx="0.8" fill="#fff"/>
  <!-- bell -->
  <path d="M1332 748.6 Q1333.6 747.2 1333.6 744.6 L1333.6 742.6 Q1333.6 737.4 1338.2 737.4 Q1342.8 737.4 1342.8 742.6 L1342.8 744.6 Q1342.8 747.2 1344.4 748.6 Z" fill="#d9eaf7"/>
  <path d="M1336.2 750 A2.1 2.1 0 0 0 1340.2 750 Z" fill="#d9eaf7"/>
</svg>
<div class="abs" style="left:577.4px;top:728.6px;width:16px;text-align:center;font-size:12px;line-height:14px;letter-spacing:-0.9px;color:#111">11</div>
<div class="abs" style="left:929.6px;top:729.4px;width:15px;text-align:center;font-size:9px;line-height:11px;color:#fff">M</div>
<div class="abs tbt" style="left:1145.4px;top:738.4px;letter-spacing:-0.9px">ENG</div>
<div class="abs tbt" style="left:1262px;top:729.8px;width:60.2px;text-align:right;letter-spacing:-0.35px">2:58 PM</div>
<div class="abs tbt" style="left:1262px;top:745.9px;width:60.2px;text-align:right;letter-spacing:0.13px">9/23/2024</div>
<!-- ===== watermark ===== -->
<div class="abs" id="wm1" dir="rtl" style="right:597.1px;top:669.5px;transform:scaleX(0.914);transform-origin:100% 50%;font-family:'DejaVu Sans',sans-serif;font-weight:bold;font-size:51px;line-height:66px;color:#c4c4c4;opacity:0.47;white-space:nowrap">مستقل</div>
<div class="abs" id="wm2" style="left:599.4px;top:722.8px;font-family:'Liberation Sans',sans-serif;font-weight:bold;font-size:27.5px;line-height:32px;letter-spacing:-0.2px;color:#c4c4c4;opacity:0.47;white-space:nowrap">mostaql.com</div>
</body>
</html>
